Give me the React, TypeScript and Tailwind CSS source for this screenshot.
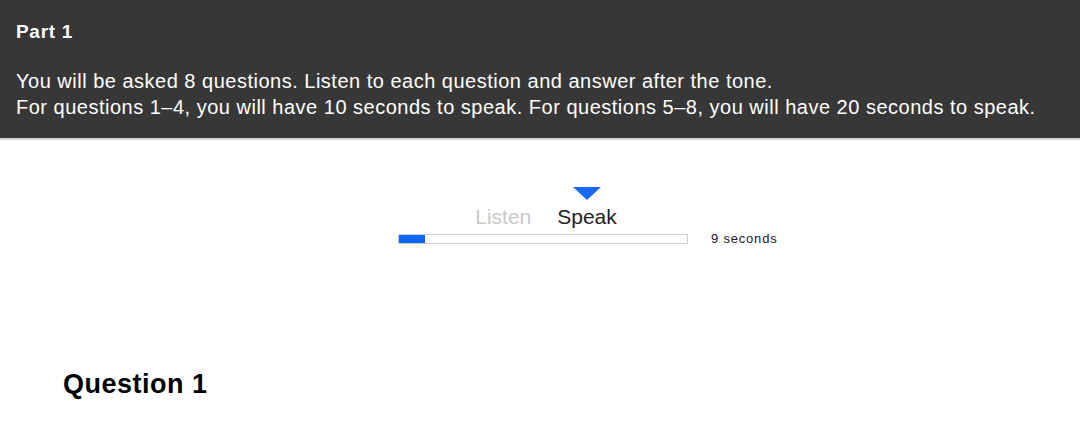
const font = { fontFamily: '"Liberation Sans", Arial, sans-serif' };

function StageMarker({ label, active }: { label: string; active: boolean }) {
  return (
    <div className="flex flex-col items-center">
      <div
        className={`h-0 w-0 border-x-[14px] border-t-[13px] border-x-transparent ${
          active ? 'border-t-[#1769ff]' : 'border-t-transparent'
        }`}
      />
      <span
        className={`mt-[5px] text-[21px] leading-[24px] ${active ? 'text-[#222]' : 'text-[#c9c9c9]'}`}
      >
        {label}
      </span>
    </div>
  );
}

export default function App() {
  const elapsed = 9;

  return (
    <div className="min-h-[429px] bg-white" style={font}>
      <header className="border-b-2 border-[#d6d6d6] bg-[#373737] px-4 pb-[18px] pt-[22px] text-white">
        <h1 className="text-[19px] font-bold leading-[20px] tracking-[0.7px]">Part 1</h1>
        <p className="mt-[26px] text-[20px] leading-[26px] tracking-[0.5px]">
          You will be asked 8 questions. Listen to each question and answer after the tone.
          <br />
          For questions 1–4, you will have 10 seconds to speak. For questions 5–8, you will have 20 seconds to speak.
        </p>
      </header>

      <section className="ml-[398px] mt-[47px] w-[400px]">
        <div className="flex w-[290px] justify-center gap-[26px] pl-[6px]">
          <StageMarker label="Listen" active={false} />
          <StageMarker label="Speak" active />
        </div>
        <div className="flex items-center gap-[23px]">
          <div className="h-[10px] w-[290px] border border-[#cfcfcf] bg-white">
            <div className="h-full bg-[#0a66ff]" style={{ width: `${elapsed}%` }} />
          </div>
          <span className="text-[13px] tracking-[0.8px] text-[#222]">{elapsed} seconds</span>
        </div>
      </section>

      <h2 className="mt-[120px] pl-[63px] text-[27px] font-bold leading-[30px] tracking-[0.5px] text-black">
        Question 1
      </h2>
    </div>
  );
}
